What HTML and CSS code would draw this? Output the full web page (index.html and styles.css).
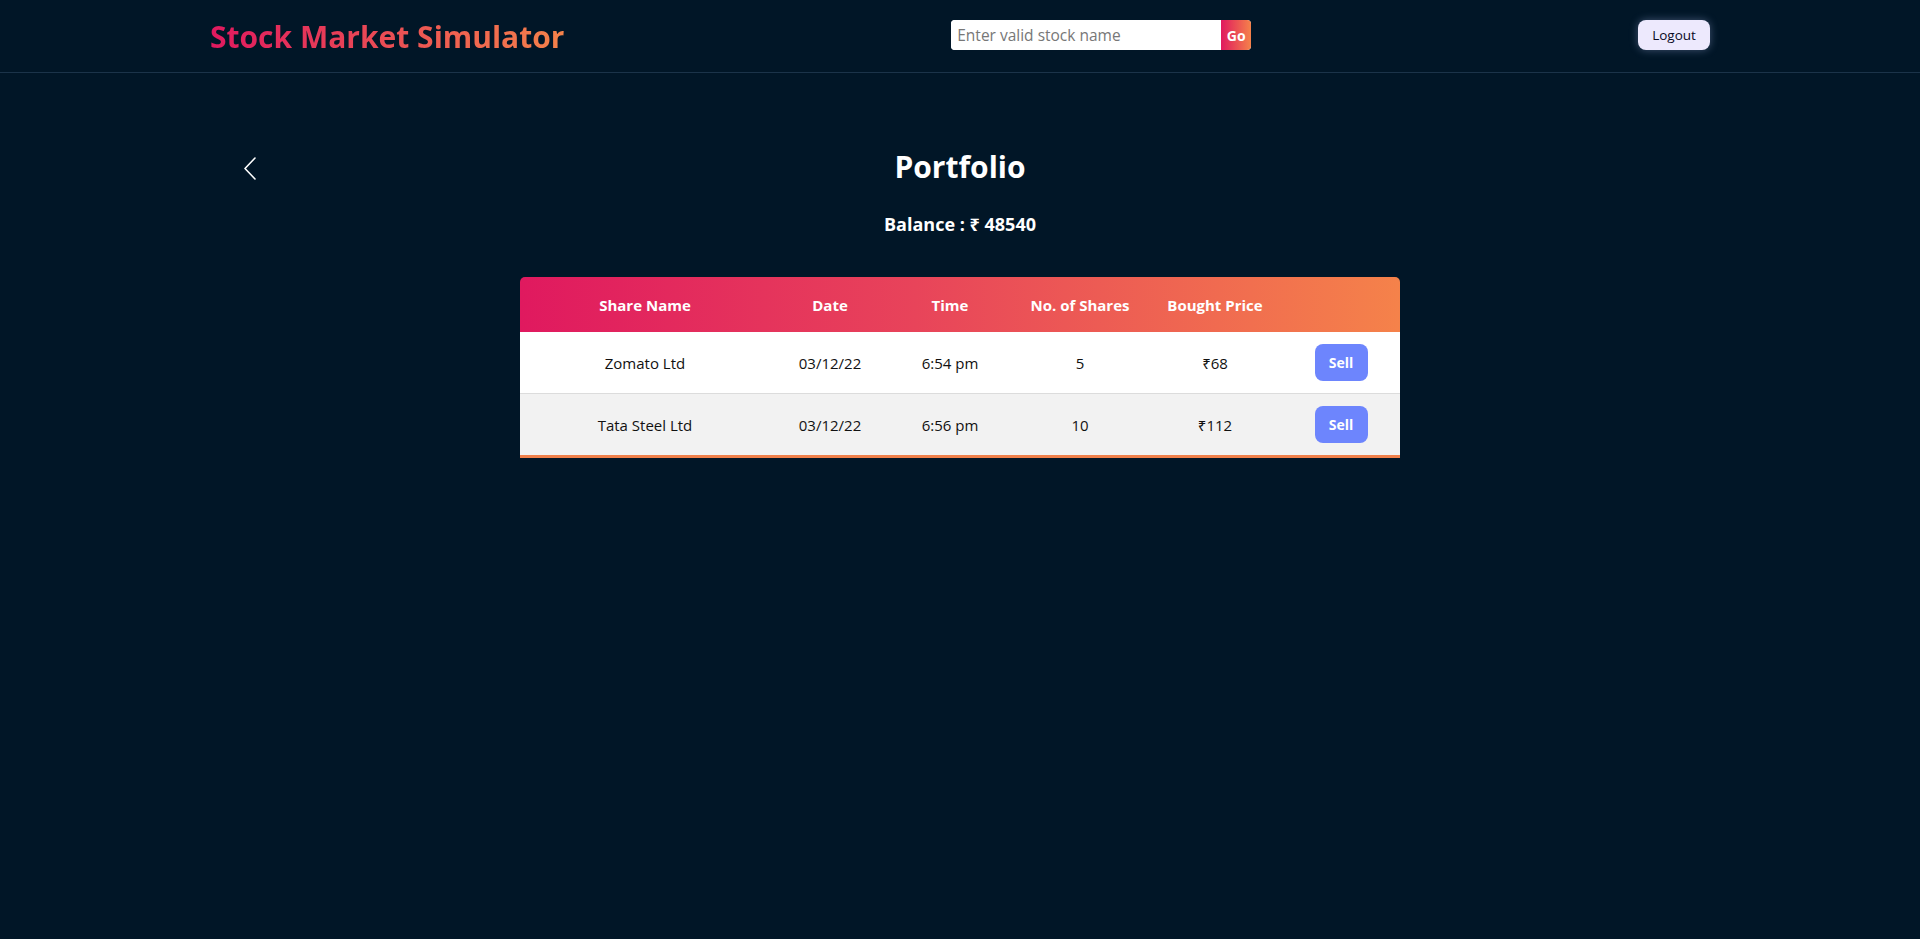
FILE: index.html
```html
<!DOCTYPE html>
<html lang="en">
<head>
<meta charset="utf-8">
<title>Stock Market Simulator</title>
<link rel="stylesheet" href="styles.css">
</head>
<body>
<header class="navbar">
  <div class="nav-inner">
    <h1 class="brand">Stock Market Simulator</h1>
    <form class="search">
      <input class="search-input" type="text" placeholder="Enter valid stock name">
      <button class="search-go" type="button">Go</button>
    </form>
    <button class="logout" type="button">Logout</button>
  </div>
</header>
<main class="main">
  <div class="title-row">
    <a class="back" href="#" aria-label="Back">
      <svg width="12" height="23" viewBox="0 0 12 23"><polyline points="11,1 1,11.5 11,22" fill="none" stroke="#fff" stroke-width="1.6" stroke-linecap="round" stroke-linejoin="round"/></svg>
    </a>
    <h2 class="page-title">Portfolio</h2>
    <span></span>
  </div>
  <p class="balance">Balance : ₹ 48540</p>
  <div class="table-wrap">
    <table class="portfolio">
      <colgroup>
        <col class="c-name"><col class="c-date"><col class="c-time"><col class="c-shares"><col class="c-price"><col class="c-action">
      </colgroup>
      <thead>
        <tr>
          <th>Share Name</th><th>Date</th><th>Time</th><th>No. of Shares</th><th>Bought Price</th><th></th>
        </tr>
      </thead>
      <tbody>
        <tr>
          <td>Zomato Ltd</td><td>03/12/22</td><td>6:54 pm</td><td>5</td><td>₹68</td><td><button class="sell" type="button">Sell</button></td>
        </tr>
        <tr class="alt">
          <td>Tata Steel Ltd</td><td>03/12/22</td><td>6:56 pm</td><td>10</td><td>₹112</td><td><button class="sell" type="button">Sell</button></td>
        </tr>
      </tbody>
    </table>
  </div>
</main>
</body>
</html>
```
FILE: styles.css
```css
* { box-sizing: border-box; }
html, body { margin: 0; padding: 0; }
body {
  background: #011627;
  font-family: "Open Sans", "Noto Sans", sans-serif;
  color: #fff;
  min-height: 939px;
}
.navbar {
  height: 73px;
  border-bottom: 1px solid #1b3349;
}
.nav-inner {
  width: 1500px;
  margin: 0 auto;
  height: 72px;
  display: flex;
  align-items: center;
  justify-content: space-between;
}
.brand {
  margin: 0;
  font-size: 30px;
  font-weight: 700;
  line-height: 40px;
  background: linear-gradient(90deg, #e0195f 0%, #f5824a 100%);
  -webkit-background-clip: text;
  background-clip: text;
  color: transparent;
  padding-top: 1px;
}
.search {
  display: flex;
  width: 300px;
  height: 30px;
  margin: 0 0 2px 0;
  border-radius: 4px;
  overflow: hidden;
  background: #fff;
}
.search-input {
  flex: 1;
  border: none;
  outline: none;
  padding: 0 6px;
  font-family: "Open Sans", "Noto Sans", sans-serif;
  font-size: 15.5px;
  color: #222;
  background: #fff;
  min-width: 0;
}
.search-input::placeholder { color: #777; }
.search-go {
  width: 30px;
  border: none;
  padding: 0;
  background: linear-gradient(90deg, #e0195f, #f5824a);
  color: #fff;
  font-family: "Open Sans", "Noto Sans", sans-serif;
  font-weight: 700;
  font-size: 14px;
}
.logout {
  width: 72px;
  height: 30px;
  margin-bottom: 2px;
  border: none;
  border-radius: 8px;
  background: #ede9fd;
  color: #0a0a1f;
  font-family: "Open Sans", "Noto Sans", sans-serif;
  font-size: 13.5px;
  box-shadow: 0 0 8px rgba(190, 200, 255, 0.35);
  padding: 0;
}
.main {
  width: 1500px;
  margin: 0 auto;
  padding-top: 72px;
}
.title-row {
  display: grid;
  grid-template-columns: 1fr auto 1fr;
  align-items: center;
}
.back {
  justify-self: start;
  margin-left: 34px;
  margin-top: 2px;
  display: flex;
}
.page-title {
  margin: 0;
  font-size: 30px;
  font-weight: 700;
  line-height: 44px;
  text-align: center;
}
.balance {
  margin: 23px 0 0;
  text-align: center;
  font-size: 18px;
  font-weight: 700;
  line-height: 24px;
}
.table-wrap {
  width: 880px;
  margin: 41px auto 0;
  border-radius: 5px 5px 0 0;
  overflow: hidden;
  border-bottom: 3px solid #f0804b;
}
.portfolio {
  width: 100%;
  border-collapse: collapse;
  table-layout: fixed;
  text-align: center;
}
.c-name { width: 250px; }
.c-date { width: 120px; }
.c-time { width: 120px; }
.c-shares { width: 140px; }
.c-price { width: 130px; }
.c-action { width: 120px; }
.portfolio thead tr {
  background: linear-gradient(90deg, #e0195f 0%, #e8445a 45%, #f5824a 100%);
}
.portfolio th {
  box-sizing: content-box;
  height: 55px;
  padding: 0;
  font-size: 15px;
  font-weight: 700;
  color: #fff;
  vertical-align: middle;
}
.portfolio td {
  box-sizing: content-box;
  height: 61px;
  padding: 0;
  font-size: 15px;
  color: #111;
  vertical-align: middle;
  background: #fff;
}
.portfolio tbody tr:first-child td { border-bottom: 1px solid #dcdcdc; }
.portfolio tr.alt td { background: #f2f2f2; }
.sell {
  width: 53px;
  height: 37px;
  border: none;
  border-radius: 8px;
  background: #6d85fd;
  color: #fff;
  font-family: "Open Sans", "Noto Sans", sans-serif;
  font-weight: 700;
  font-size: 14px;
  padding: 0;
  margin-left: 2px;
}
```
